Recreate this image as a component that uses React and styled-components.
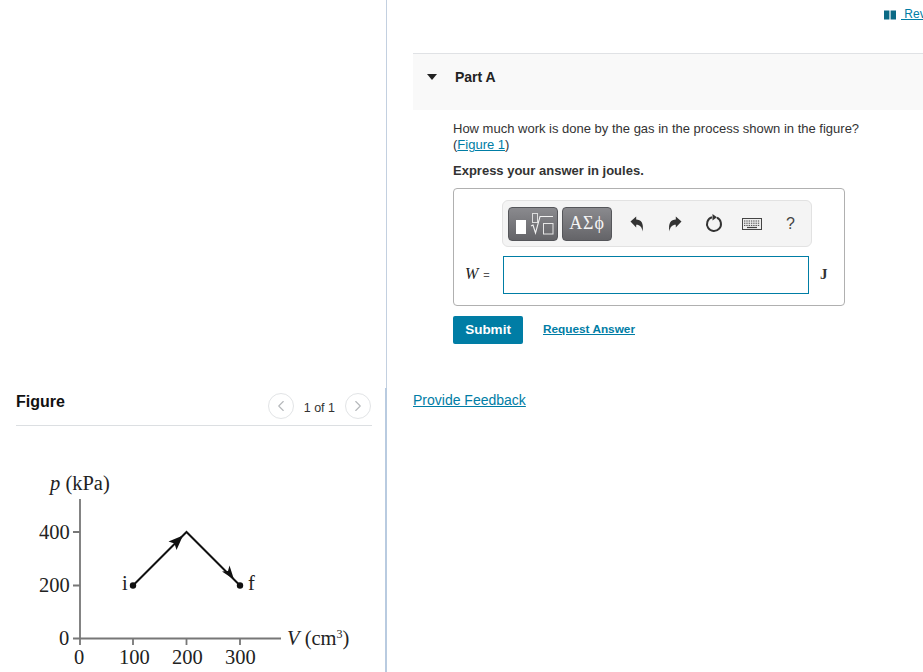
import React from 'react'
import styled, { createGlobalStyle } from 'styled-components'
import { ChevronLeft, ChevronRight } from 'lucide-react'

const GlobalStyle = createGlobalStyle`
  html, body {
    margin: 0;
    padding: 0;
    background: #fff;
    overflow: hidden;
  }
  body {
    font-family: "Liberation Sans", Arial, sans-serif;
    color: #222;
  }
`

const Page = styled.div`
  display: flex;
  width: 923px;
  height: 672px;
  overflow: hidden;
`

const LeftColumn = styled.aside`
  display: flex;
  flex-direction: column;
  width: 387px;
  flex: none;
  height: 672px;
`

const EmptyPane = styled.div`
  height: 388px;
  flex: none;
  box-sizing: border-box;
  border-right: 1px solid #c3d0e0;
`

const FigurePane = styled.div`
  flex: 1;
  min-height: 0;
  padding-top: 5px;
  border-right: 2px solid #b9cbe0;
`

const FigureHeader = styled.div`
  display: flex;
  align-items: flex-start;
  justify-content: space-between;
  margin: 0 13px 0 16px;
  height: 32px;
  border-bottom: 1px solid #dcdfe2;
`

const FigureTitle = styled.h2`
  margin: 0;
  font-size: 16px;
  line-height: 18px;
  font-weight: 700;
  color: #111;
`

const Pager = styled.div`
  display: flex;
  align-items: flex-start;
  gap: 10px;
  margin-right: 1px;
  font-size: 12.5px;
  line-height: 26px;
  color: #333;
`

const PagerLabel = styled.span`
  padding-top: 2px;
`

const PagerButton = styled.span`
  display: flex;
  align-items: center;
  justify-content: center;
  width: 26px;
  height: 26px;
  box-sizing: border-box;
  border: 1px solid #e2e4e6;
  border-radius: 50%;
  color: #b5b8bb;
`

const Chart = styled.svg`
  display: block;
`

const RightColumn = styled.main`
  flex: 1;
  min-width: 0;
  padding-left: 26px;
`

const TopBar = styled.div`
  display: flex;
  justify-content: flex-end;
  height: 53px;
  box-sizing: border-box;
  padding-top: 7px;
`

const ReviewLink = styled.a`
  display: flex;
  align-items: center;
  gap: 5px;
  width: 39px;
  height: 15px;
  overflow: hidden;
  white-space: nowrap;
  font-size: 12px;
  line-height: 15px;
  color: #007da5;
  text-decoration: underline;
`

const PartHeader = styled.div`
  display: flex;
  align-items: flex-start;
  height: 57px;
  box-sizing: border-box;
  padding: 15px 0 0 14px;
  gap: 18px;
  background: #f9f9f9;
  border-top: 1px solid #e0e2e5;
`

const Caret = styled.span`
  width: 0;
  height: 0;
  margin-top: 5px;
  border-left: 5.5px solid transparent;
  border-right: 5.5px solid transparent;
  border-top: 6px solid #222;
`

const PartTitle = styled.h3`
  margin: 0;
  font-size: 14px;
  line-height: 16px;
  font-weight: 700;
  color: #222;
`

const PartBody = styled.section`
  padding: 11px 0 0 40px;
`

const Question = styled.p`
  margin: 0;
  width: 420px;
  font-size: 13px;
  line-height: 16px;
  color: #333;
`

const TextLink = styled.a`
  color: #007da5;
  text-decoration: underline;
`

const Instruction = styled.p`
  margin: 10px 0 0;
  font-size: 13px;
  line-height: 16px;
  font-weight: 700;
  color: #333;
`

const AnswerBox = styled.div`
  width: 392px;
  height: 118px;
  box-sizing: border-box;
  margin-top: 9px;
  padding: 11px 0 0 12px;
  border: 1px solid #b0b0b0;
  border-radius: 4px;
`

const Toolbar = styled.div`
  display: flex;
  align-items: center;
  width: 310px;
  height: 47px;
  box-sizing: border-box;
  margin-left: 36px;
  padding-left: 5px;
  gap: 4px;
  background: #f4f4f4;
  border: 1px solid #e2e2e2;
  border-radius: 6px;
`

const TemplateButton = styled.span`
  display: flex;
  align-items: center;
  justify-content: center;
  width: 50px;
  height: 34px;
  box-sizing: border-box;
  border: 1px solid #55565a;
  border-radius: 4px;
  background: linear-gradient(#8a8a8e, #646468);
  color: #f4f4f4;
  font-family: "Liberation Serif", serif;
  font-size: 18px;
  letter-spacing: 0.8px;
`

const ToolIcons = styled.div`
  display: flex;
  align-items: center;
  margin-left: 2px;
`

const ToolIcon = styled.span`
  display: flex;
  align-items: center;
  justify-content: center;
  width: 38.3px;
  height: 33px;
  color: #444;
  font-size: 16px;
`

const InputRow = styled.div`
  display: flex;
  align-items: center;
  margin-top: 9px;
`

const VarLabel = styled.span`
  width: 37px;
  flex: none;
  margin: -2px 0 0 -1px;
  padding-right: 1px;
  font-family: "Liberation Serif", serif;
  font-size: 16px;
  color: #222;
  white-space: nowrap;
  em {
    font-style: italic;
  }
  small {
    font-family: "Liberation Sans", sans-serif;
    font-size: 11px;
    margin-left: 5px;
    color: #555;
  }
`

const AnswerInput = styled.input`
  width: 306px;
  height: 38px;
  box-sizing: border-box;
  padding: 0 6px;
  border: 1px solid #007da5;
  border-radius: 0;
  outline: none;
  background: #fff;
`

const Unit = styled.span`
  margin: -2px 0 0 11px;
  font-family: "Liberation Serif", serif;
  font-size: 15px;
  font-weight: 700;
  color: #333;
`

const Actions = styled.div`
  display: flex;
  align-items: center;
  gap: 20px;
  margin-top: 10px;
`

const SubmitButton = styled.button`
  width: 70px;
  height: 28px;
  padding: 0 0 2px;
  border: 0;
  border-radius: 2px;
  background: #007da5;
  color: #fff;
  font-family: inherit;
  font-size: 13.5px;
  font-weight: 700;
`

const RequestLink = styled(TextLink)`
  font-size: 11.8px;
  font-weight: 700;
  margin-top: -3px;
`

const FeedbackLink = styled(TextLink)`
  display: block;
  margin-top: 48px;
  font-size: 14px;
  line-height: 16px;
`

const chartText = {
  fontFamily: '"Liberation Serif", serif',
  fontSize: 20.5,
  fill: '#222',
}

const PvChart = () => (
  <Chart width="385" height="246" viewBox="0 0 385 246">
    <g {...chartText}>
      <text x="50" y="64"><tspan fontStyle="italic">p</tspan> (kPa)</text>
      <text x="39" y="112.5">400</text>
      <text x="39" y="166">200</text>
      <text x="59" y="219">0</text>
      <text x="74" y="238">0</text>
      <text x="119" y="238">100</text>
      <text x="172" y="238">200</text>
      <text x="225" y="238">300</text>
      <text x="122" y="164">i</text>
      <text x="248" y="164">f</text>
      <text x="287" y="219"><tspan fontStyle="italic">V</tspan> (cm<tspan fontSize="12" dy="-7">3</tspan><tspan dy="7">)</tspan></text>
    </g>
    <path d="M80 73V219M73 106H80M73 159.5H80M73 212.5H281M133 212.5V219M186.5 212.5V219M240 212.5V219" stroke="#777" strokeWidth="1.8" fill="none" />
    <path d="M133 159.5L186.5 106L240 159.5" stroke="#111" strokeWidth="2" fill="none" />
    <circle cx="133" cy="159.5" r="3.2" fill="#111" />
    <circle cx="240" cy="159.5" r="3.2" fill="#111" />
    <path d="M183 109.5L168.5 115.5L174.5 117.5L176.5 124Z" fill="#111" />
    <path d="M234 153.5L222 145.5L228 145L229.5 139.5Z" fill="#111" />
  </Chart>
)

const TemplateIcon = () => (
  <svg width="48" height="32" viewBox="0 0 48 32" fill="none">
    <rect x="7" y="12" width="10" height="14" fill="#fff" />
    <rect x="23.5" y="5.5" width="5" height="9" stroke="#ddd" />
    <path d="M22 18L24 17L26.5 25L31 8.5H44" stroke="#f2f2f2" strokeWidth="1.1" />
    <rect x="34.5" y="15.5" width="9.5" height="10.5" stroke="#e6e6e6" />
  </svg>
)

const UndoIcon = ({ flip }) => (
  <svg width="14" height="16" viewBox="0 0 14 16" style={flip ? { transform: 'scaleX(-1)' } : undefined}>
    <path d="M0.5 5.5L6.2 0.5V3.4C11 3.4 14 6.8 12.6 15.5C11.8 11 10 8.8 6.2 8.8V11.6Z" fill="#333" />
  </svg>
)

const ResetIcon = () => (
  <svg width="18" height="19" viewBox="0 0 18 19" fill="none">
    <path d="M12 3.7A7 7 0 1 1 7 3.3" stroke="#333" strokeWidth="2" />
    <path d="M7.5 0L12 3.2L7.5 6.6Z" fill="#333" />
  </svg>
)

const KeyboardIcon = () => (
  <svg width="20" height="12" viewBox="0 0 20 12" fill="none">
    <rect x="0.5" y="0.5" width="19" height="11" fill="#eee" stroke="#444" />
    <path d="M2 3H18M2 5.2H18M2 7.4H18" stroke="#444" strokeWidth="1" strokeDasharray="1.4 0.9" />
    <path d="M5 9.5H15" stroke="#444" strokeWidth="1.2" />
  </svg>
)

const BookIcon = () => (
  <svg width="12" height="10" viewBox="0 0 12 10" style={{ flex: 'none' }}>
    <path d="M0 0.5H5.4V9.5H0ZM6.6 0.5H12V9.5H6.6Z" fill="#0b6a85" />
  </svg>
)

export default function App() {
  return (
    <Page>
      <GlobalStyle />
      <LeftColumn>
        <EmptyPane />
        <FigurePane>
          <FigureHeader>
            <FigureTitle>Figure</FigureTitle>
            <Pager>
              <PagerButton><ChevronLeft size={18} strokeWidth={1.5} /></PagerButton>
              <PagerLabel>1 of 1</PagerLabel>
              <PagerButton><ChevronRight size={18} strokeWidth={1.5} /></PagerButton>
            </Pager>
          </FigureHeader>
          <PvChart />
        </FigurePane>
      </LeftColumn>
      <RightColumn>
        <TopBar>
          <ReviewLink><BookIcon /><span>&nbsp;Review</span></ReviewLink>
        </TopBar>
        <PartHeader>
          <Caret />
          <PartTitle>Part A</PartTitle>
        </PartHeader>
        <PartBody>
          <Question>
            How much work is done by the gas in the process shown in the figure?
            <br />(<TextLink>Figure 1</TextLink>)
          </Question>
          <Instruction>Express your answer in joules.</Instruction>
          <AnswerBox>
            <Toolbar>
              <TemplateButton><TemplateIcon /></TemplateButton>
              <TemplateButton>ΑΣϕ</TemplateButton>
              <ToolIcons>
                <ToolIcon><UndoIcon /></ToolIcon>
                <ToolIcon><UndoIcon flip /></ToolIcon>
                <ToolIcon><ResetIcon /></ToolIcon>
                <ToolIcon><KeyboardIcon /></ToolIcon>
                <ToolIcon>?</ToolIcon>
              </ToolIcons>
            </Toolbar>
            <InputRow>
              <VarLabel><em>W</em><small>=</small></VarLabel>
              <AnswerInput />
              <Unit>J</Unit>
            </InputRow>
          </AnswerBox>
          <Actions>
            <SubmitButton>Submit</SubmitButton>
            <RequestLink>Request Answer</RequestLink>
          </Actions>
        </PartBody>
        <FeedbackLink>Provide Feedback</FeedbackLink>
      </RightColumn>
    </Page>
  )
}
